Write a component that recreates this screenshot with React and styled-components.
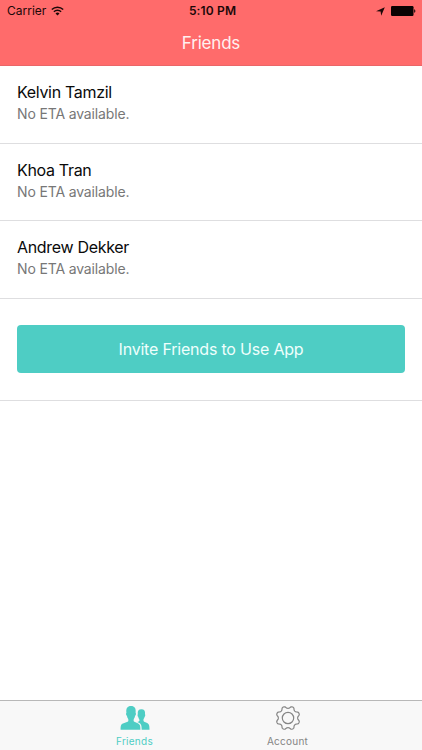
import React from "react";
import styled, { createGlobalStyle } from "styled-components";

const GlobalStyle = createGlobalStyle`
  * { box-sizing: border-box; }
  html, body { margin: 0; padding: 0; background: #fff; }
  body { font-family: Inter, "Liberation Sans", sans-serif; overflow: hidden; }
`;

const Screen = styled.div`
  width: 422px;
  height: 750px;
  display: flex;
  flex-direction: column;
  background: #fff;
`;

const Header = styled.header`
  flex: none;
  height: 66px;
  background: #ff6b6b;
  border-bottom: 1px solid #ea6668;
`;

const StatusBar = styled.div`
  display: grid;
  grid-template-columns: 1fr auto 1fr;
  align-items: center;
  height: 22px;
  padding: 0 6px 0 7px;
  color: #1c0808;
  font-size: 12px;
  line-height: 22px;
`;

const Carrier = styled.div`
  display: flex;
  align-items: center;
  gap: 5px;

  svg {
    margin-bottom: 1px;
  }
`;

const Clock = styled.div`
  padding-left: 2px;
  font-weight: 600;
  letter-spacing: 0.15px;
`;

const Indicators = styled.div`
  display: flex;
  align-items: center;
  justify-content: flex-end;
  gap: 6px;
`;

const Title = styled.h1`
  margin: 0;
  height: 43px;
  line-height: 43px;
  text-align: center;
  color: #fff1f0;
  font-size: 17px;
  font-weight: 400;
  letter-spacing: -0.2px;
`;

const List = styled.ul`
  margin: 0;
  padding: 0;
  list-style: none;
`;

const FriendRow = styled.li`
  height: 77.5px;
  padding: 15px 17px 0;
  border-bottom: 1px solid #dedee0;
`;

const Name = styled.div`
  color: #0a0a0a;
  font-size: 16px;
  line-height: 22px;
  letter-spacing: -0.32px;
`;

const Eta = styled.div`
  color: #777;
  font-size: 14px;
  line-height: 22px;
  letter-spacing: -0.15px;
`;

const InviteSection = styled.section`
  height: 102px;
  padding: 26px 17px 0;
  border-bottom: 1px solid #dedee0;
`;

const InviteButton = styled.button`
  display: block;
  width: 100%;
  height: 48px;
  padding: 0;
  border: 0;
  border-radius: 4px;
  background: #4ecdc4;
  color: #effffc;
  font: 400 16px/49px Inter, "Liberation Sans", sans-serif;
  letter-spacing: -0.2px;
`;

const TabBar = styled.nav`
  flex: none;
  display: flex;
  justify-content: center;
  height: 50px;
  margin-top: auto;
  background: #f8f8f8;
  border-top: 1px solid #b8b8b8;
`;

const Tab = styled.div`
  display: flex;
  flex-direction: column;
  align-items: center;
  width: 153px;
  padding-top: 2px;
  color: ${(p) => (p.$active ? "#4ecdc4" : "#858585")};
`;

const TabLabel = styled.span`
  margin-top: 1px;
  font-size: 10px;
  line-height: 14px;
  letter-spacing: 0.25px;
`;

const friends = ["Kelvin Tamzil", "Khoa Tran", "Andrew Dekker"];

const WifiIcon = () => (
  <svg width="13" height="10" viewBox="0 0 13 10" fill="none" stroke="currentColor" strokeWidth="1.5">
    <path d="M0.8 3.5a8.1 8.1 0 0 1 11.4 0" />
    <path d="M2.9 5.8a5.1 5.1 0 0 1 7.2 0" />
    <path d="M6.5 9.6 4.5 7.5a2.8 2.8 0 0 1 4 0z" fill="currentColor" stroke="none" />
  </svg>
);

const LocationIcon = () => (
  <svg width="9" height="9" viewBox="0 0 9 9" fill="currentColor">
    <path d="M8.8.2 5.2 8.8 4.6 4.6 0 4.2z" />
  </svg>
);

const BatteryIcon = () => (
  <svg width="25" height="10" viewBox="0 0 25 10" fill="#0a0303">
    <rect width="22.5" height="10" rx="1.2" />
    <path d="M23.2 3.2c1.5.3 1.5 3.3 0 3.6z" />
  </svg>
);

const PeopleIcon = () => (
  <svg width="30" height="30" viewBox="0 0 30 30" fill="currentColor">
    <path d="M.6 26.7C.6 22.8.9 21.500 3 20.6L7.600 18.8C8.400 18.3 8.600 17.2 8.200 15.9C7.500 15.1 7.100 14 6.900 12.8C6.100 12.6 5.700 10.2 6.400 9.700C5.900 5.2 7.400 3 11 3S16.100 5.2 15.600 9.700C16.300 10.2 15.900 12.6 15.100 12.8C14.900 14 14.500 15.1 13.800 15.9C13.400 17.2 13.600 18.3 14.400 18.8L18.200 20.6C20.200 21.6 20.400 23.2 20.400 26.7Z" />
    <path d="M21.700 26.7C21.700 22.7 21.300 20.9 18.900 19.7L17.200 18.9C18.700 18.5 19.600 18.1 19.500 17.2C19.500 16.5 19.200 16.1 18.900 15.7C18.500 15.1 18.300 14.5 18.200 13.8C17.600 13.6 17.300 11.7 17.800 11.2C17.400 7.900 18.500 6.2 21.400 6.2S25.400 7.900 25 11.2C25.500 11.7 25.200 13.6 24.600 13.8C24.500 14.6 24.100 15.4 23.600 16C23.300 17 23.400 18.2 24.200 18.7L27.200 20.1C29.100 21.1 29.500 22.7 29.500 26.7Z" />
  </svg>
);

const GEAR_PATH = (() => {
  const steps = 128;
  const points = [];
  for (let i = 0; i < steps; i++) {
    const a = (i / steps) * Math.PI * 2;
    const wave = Math.tanh(1.5 * Math.cos(8 * a)) / Math.tanh(1.5);
    const r = 10.8 - 1.1 * wave;
    points.push(`${(15 + r * Math.sin(a)).toFixed(2)} ${(15 - r * Math.cos(a)).toFixed(2)}`);
  }
  return `M${points.join("L")}Z`;
})();

const GearIcon = () => (
  <svg width="30" height="30" viewBox="0 0 30 30" fill="none" stroke="currentColor" strokeWidth="1.2" strokeLinejoin="round">
    <path d={GEAR_PATH} />
    <circle cx="15" cy="15" r="5.7" />
  </svg>
);

export default function App() {
  return (
    <Screen>
      <GlobalStyle />
      <Header>
        <StatusBar>
          <Carrier>Carrier<WifiIcon /></Carrier>
          <Clock>5:10 PM</Clock>
          <Indicators><LocationIcon /><BatteryIcon /></Indicators>
        </StatusBar>
        <Title>Friends</Title>
      </Header>
      <List>
        {friends.map((name) => (
          <FriendRow key={name}>
            <Name>{name}</Name>
            <Eta>No ETA available.</Eta>
          </FriendRow>
        ))}
      </List>
      <InviteSection>
        <InviteButton>Invite Friends to Use App</InviteButton>
      </InviteSection>
      <TabBar>
        <Tab $active><PeopleIcon /><TabLabel>Friends</TabLabel></Tab>
        <Tab><GearIcon /><TabLabel>Account</TabLabel></Tab>
      </TabBar>
    </Screen>
  );
}
